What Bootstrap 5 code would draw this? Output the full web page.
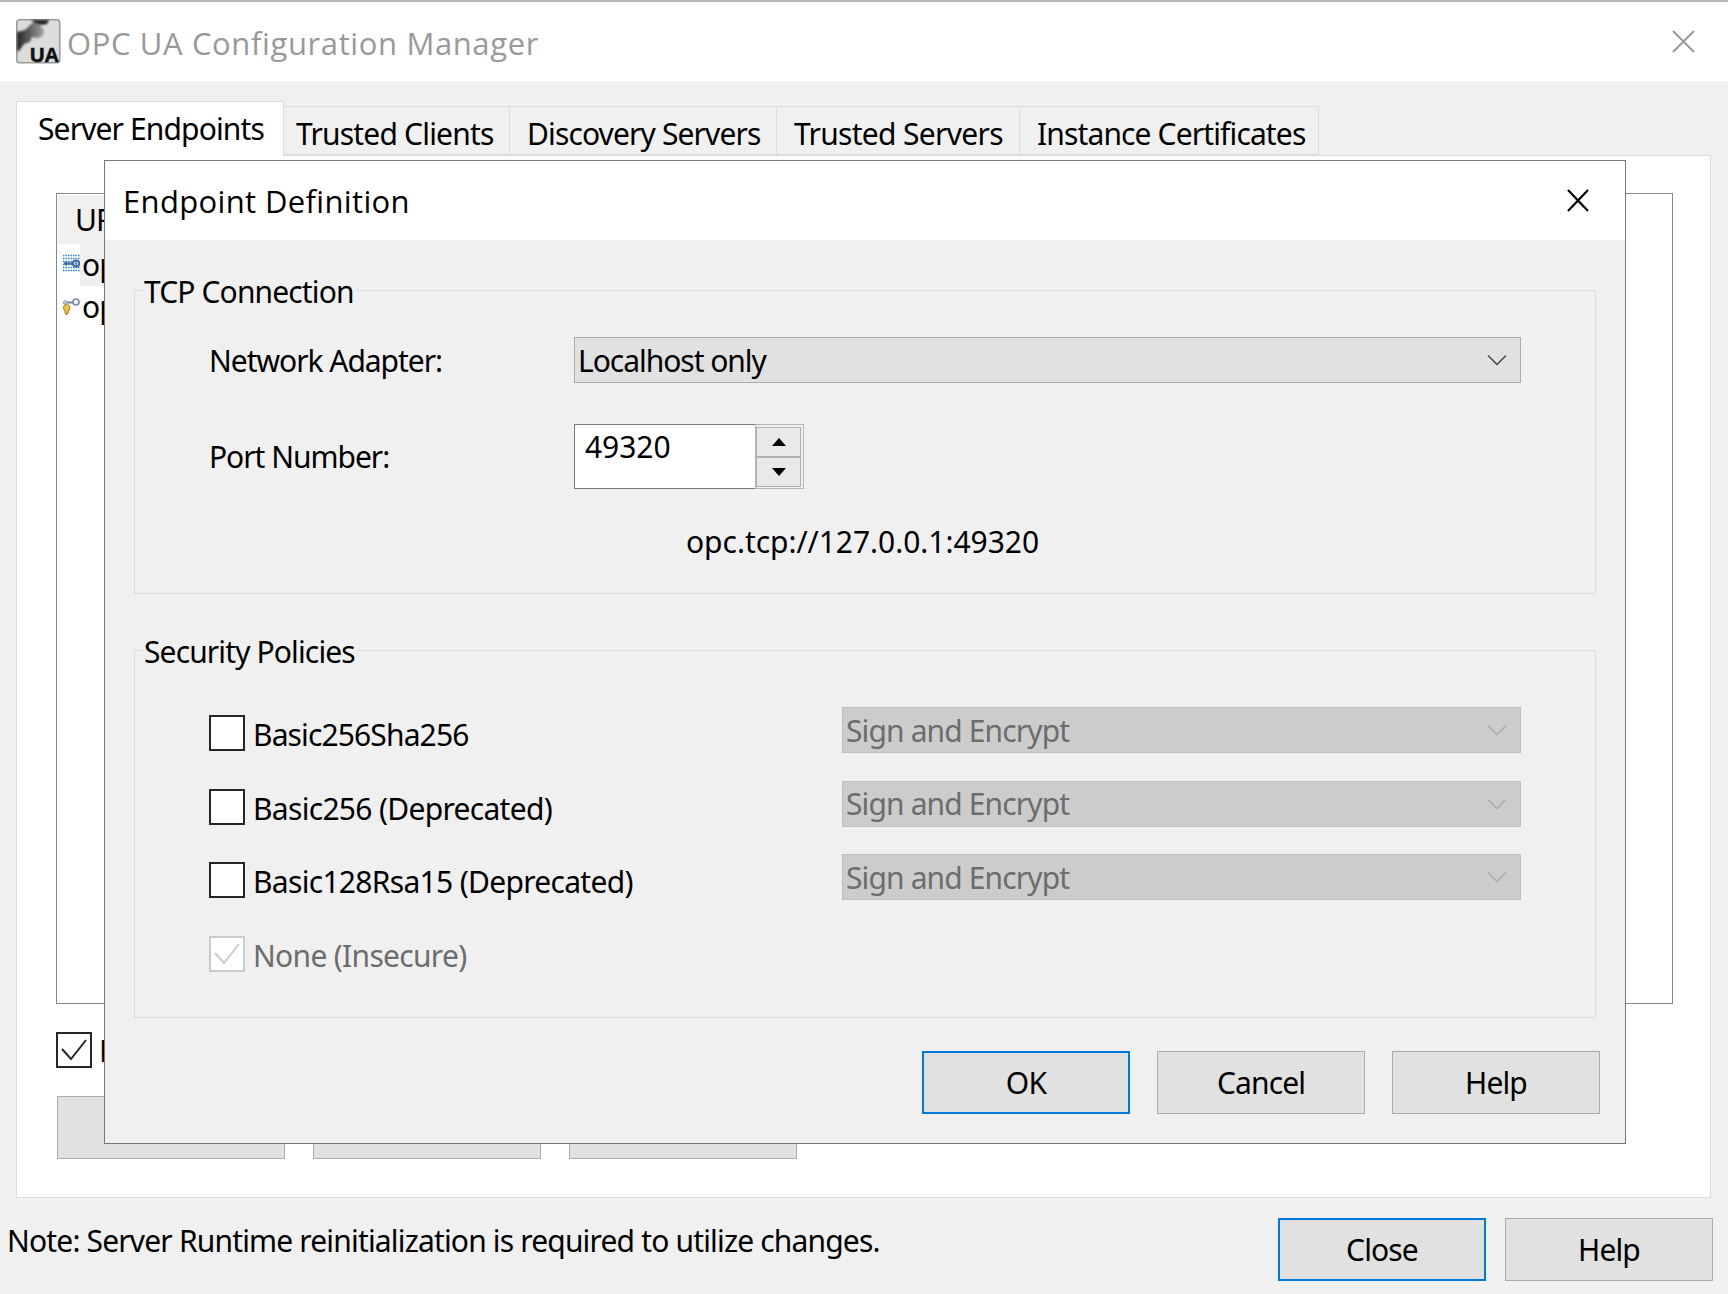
<!DOCTYPE html>
<html lang="en">
<head>
<meta charset="utf-8">
<title>OPC UA Configuration Manager</title>
<link href="https://cdn.jsdelivr.net/npm/bootstrap@5.3.0/dist/css/bootstrap.min.css" rel="stylesheet">
<style>
body{width:1728px;height:1294px;overflow:hidden;background:#f0f0f0;color:#000;font:30px/40px "Noto Sans",sans-serif;letter-spacing:-.87px;position:relative}
.ls-a{letter-spacing:-.69px}
.ls-b{letter-spacing:-1.03px}
.ls-0{letter-spacing:-.04px}
.win-title{height:81px;flex:none;background:#fff;border-top:2px solid #b5b8b5;padding:17px 33px 0 16px}
.win-title .cap{font:31px/42px "Open Sans",sans-serif;color:#999;letter-spacing:.62px;margin:3px 0 0 6px}
.tabs{height:74px;flex:none;padding-left:16px;border:0;flex-wrap:nowrap}
.tabs .nav-link{border:1px solid #dcdcdc;border-left:0;border-radius:0;margin:0;color:#000;background:#f0f0f0;height:49px;line-height:40px;padding:7px 0 0 17px;white-space:nowrap}
.tabs .nav-link.active{border:1px solid #dcdcdc;border-bottom:0;background:#fff;height:55px;margin-bottom:-1px;position:relative;z-index:1;width:268px;padding-left:21px}
.tab-2{width:226px}.tab-3{width:267px}.tab-4{width:243px}.tab-5{width:299px}
.tabs .tab-2{padding-left:12px;letter-spacing:-.8px}
.panel{margin:0 17px 0 16px;height:1043px;flex:none;border:1px solid #dcdcdc;background:#fff;padding:37px 37px 0 39px}
.list{height:811px;border:1px solid #828790;padding:1px}
.list .head{height:49px;width:1400px;background:#f0f0f0;padding:5px 0 0 17px}
.list .entry{height:42px;width:1400px;padding-left:4px}
.list .lbl{padding:0 0 0 2px;height:42px;line-height:41px}
.list .lbl.sel{background:#f0f0f0}
.wbtn{border:1px solid #adadad;border-radius:0;background:#e1e1e1;color:#000;width:208px;height:63px;padding:0;font-size:30px;line-height:61px;letter-spacing:inherit}
.wbtn.def{border:2px solid #0078d7;line-height:59px}
.wbtn.wide{width:228px}
.cbox{width:36px;height:36px;border:2px solid #262626;background:#fff;flex:none;color:#262626}
.cbox svg{display:block}
.cbox.off{border-color:#ccc;color:#ccc}
.dlg{position:absolute;left:104px;top:160px;width:1522px;height:984px;border:1px solid #777;background:#f0f0f0;z-index:5}
.dlg-title{height:79px;background:#fff;padding:19px 36px 0 18px}
.dlg-title .cap{font:31px/42px "Open Sans",sans-serif;letter-spacing:.35px}
.dlg-title svg{margin-top:1px}
.group{margin:0 29px;border:1px solid #dcdcdc}
.group .leg{display:block;width:max-content;background:#f0f0f0;margin:-19px 0 0 7px;padding:0 2px;height:39px}
.g-tcp{margin-top:50px;height:304px}
.g-sec{margin-top:56px;height:368px}
.combo{border:1px solid #adadad;background:#e1e1e1;height:46px;padding:0 13px 0 3px;line-height:45px}
.combo.off{background:#ccc;border-color:#bfbfbf;color:#6d6d6d;width:679px}
.combo.off svg{color:#aaa}
.net{margin-top:26px;padding:0 74px}
.port{margin-top:39px;padding-left:74px}
.flabel{width:365px;flex:none}
.spin{width:230px;height:65px;border:1px solid #7a7a7a;background:#fff}
.spin .num{padding:2px 0 0 10px}
.spin .ud{width:47px;outline:1px solid #b6b6ba;background:#f0f0f0;padding:2px 2px 1px 0}
.spin .ud span{height:30px;border:1px solid #b0b0b0;background:#e9e9e9}
.url{margin-top:32px;padding-left:551px}
.policies{padding-top:36px}
.policy{height:73.7px;padding:0 74px}
.policy .ptxt{margin-left:8px}
.dlg-btns{gap:27px;padding-right:25px;margin-top:33px}
</style>
</head>
<body class="d-flex flex-column">
<header class="win-title d-flex align-items-start">
<svg width="45" height="45" viewBox="0 0 45 45"><defs><linearGradient id="g" x1="0" y1="0" x2="30" y2="0" gradientUnits="userSpaceOnUse"><stop offset="0" stop-color="#222"/><stop offset=".5" stop-color="#666"/><stop offset="1" stop-color="#aaa"/></linearGradient><filter id="b"><feGaussianBlur stdDeviation="1"/></filter></defs><rect x=".8" y=".8" width="43" height="43" rx="3" fill="#dcdcdc" stroke="#999" stroke-width="1.500"/><g filter="url(#b)"><path d="M1 13 9 11 14 6 19 2 24 6 28 11 27 17 21 19 16 18 14 23 8 25 3 32H1Z" fill="url(#g)"/><path d="M15 1H33L31 5 25 6 19 4Z" fill="#222"/></g><text x="14" y="43" font-family="Liberation Sans" font-weight="700" font-size="20" letter-spacing="0" textLength="29" lengthAdjust="spacingAndGlyphs" fill="#111" stroke="#111" stroke-width=".6">UA</text></svg>
<span class="cap">OPC UA Configuration Manager</span>
<svg class="ms-auto" width="24" height="40" viewBox="0 0 24 40"><path d="M2 12 23 33M23 12 2 33" stroke="#999" stroke-width="2" fill="none"/></svg>
</header>
<nav class="nav nav-tabs tabs align-items-end">
<a class="nav-link active">Server Endpoints</a>
<a class="nav-link tab-2">Trusted Clients</a>
<a class="nav-link tab-3">Discovery Servers</a>
<a class="nav-link tab-4 ls-a">Trusted Servers</a>
<a class="nav-link tab-5">Instance Certificates</a>
</nav>
<main class="panel">
<div class="list">
<div class="head">URL</div>
<div class="entry d-flex"><svg width="18" height="42" viewBox="0 0 18 42"><path d="M1 11.500H18M1 14.500H18M1 17.500H18M1 20.500H18M1 23.500H18M1 26.500H18" stroke="#2586e0" stroke-width="1.500" stroke-dasharray="1.500 1"/><path d="M2 19.500H11" stroke="#4f78a8" stroke-width="2.600"/><circle cx="14" cy="19.500" r="3.200" fill="#b8d2ee" stroke="#3f6da3" stroke-width="1.800"/><path d="M4 17V22M14 16V23" stroke="#345f96"/></svg><span class="lbl sel flex-grow-1">opc.tcp</span></div>
<div class="entry d-flex"><svg width="18" height="42" viewBox="0 0 18 42"><path d="M3 16.500H11" stroke="#6f8299" stroke-width="2"/><circle cx="3.200" cy="16.500" r="1.800" fill="#c5cedb" stroke="#8a9ab0"/><circle cx="14" cy="16" r="3" fill="#fff" stroke="#7b8ea8" stroke-width="1.700"/><path d="M4.500 18.500a3.500 3.300 0 0 1 1.800 6V26.500L4.500 28.500 3 26.500V24.500a3.500 3.300 0 0 1 1.500-6Z" fill="#f5c542" stroke="#b58a25" stroke-width="1.200"/></svg><span class="lbl">opc.tcp</span></div>
</div>
<div class="d-flex" style="margin-top:28px"><span class="cbox"><svg width="32" height="32" viewBox="0 0 32 32"><path d="M4 15 13 25 28 6" fill="none" stroke="currentColor" stroke-width="2"/></svg></span><span style="margin:-1px 0 -3px 7px">Enable</span></div>
<div class="d-flex" style="margin:28px 0 0 1px;gap:28px"><button class="btn wbtn wide"></button><button class="btn wbtn wide"></button><button class="btn wbtn wide"></button></div>
</main>
<footer class="d-flex align-items-start" style="padding:20px 15px 0 7px"><span style="margin-top:3px;letter-spacing:-.83px" class="me-auto">Note: Server Runtime reinitialization is required to utilize changes.</span><button class="btn wbtn def" style="margin-right:19px">Close</button><button class="btn wbtn">Help</button></footer>

<section class="dlg">
<div class="dlg-title d-flex"><span class="cap">Endpoint Definition</span><svg class="ms-auto" width="22" height="40" viewBox="0 0 22 40"><path d="M1 9 21 30M21 9 1 30" stroke="#000" stroke-width="2.200" fill="none"/></svg></div>
<div class="group g-tcp"><span class="leg">TCP Connection</span>
<div class="net d-flex"><span class="flabel ls-b" style="line-height:48px">Network Adapter:</span><div class="combo flex-grow-1 d-flex justify-content-between align-items-center"><span class="ls-b">Localhost only</span><svg width="20" height="12" viewBox="0 0 20 12"><path d="M1 1.500 10 10.500 19 1.500" fill="none" stroke="#444" stroke-width="1.500"/></svg></div></div>
<div class="port d-flex"><span class="flabel ls-b" style="line-height:66px">Port Number:</span><div class="spin d-flex justify-content-between"><span class="num ls-0">49320</span><div class="ud d-flex flex-column"><span class="d-flex justify-content-center align-items-center"><svg width="14" height="8"><path d="M0 8 7 0 14 8Z"/></svg></span><span class="d-flex justify-content-center align-items-center"><svg width="14" height="8"><path d="M0 0 7 8 14 0Z"/></svg></span></div></div></div>
<div class="url ls-0">opc.tcp://127.0.0.1:49320</div>
</div>
<div class="group g-sec"><span class="leg">Security Policies</span>
<div class="policies">
<div class="policy d-flex align-items-start"><span class="cbox mt-2"></span><span class="ptxt mt-2">Basic256Sha256</span><div class="combo off ms-auto d-flex justify-content-between align-items-center"><span>Sign and Encrypt</span><svg width="20" height="12" viewBox="0 0 20 12"><path d="M1 1.500 10 10.500 19 1.500" fill="none" stroke="currentColor" stroke-width="1.500"/></svg></div></div>
<div class="policy d-flex align-items-start"><span class="cbox mt-2"></span><span class="ptxt mt-2 ls-a">Basic256 (Deprecated)</span><div class="combo off ms-auto d-flex justify-content-between align-items-center"><span>Sign and Encrypt</span><svg width="20" height="12" viewBox="0 0 20 12"><path d="M1 1.500 10 10.500 19 1.500" fill="none" stroke="currentColor" stroke-width="1.500"/></svg></div></div>
<div class="policy d-flex align-items-start"><span class="cbox mt-2"></span><span class="ptxt mt-2 ls-a">Basic128Rsa15 (Deprecated)</span><div class="combo off ms-auto d-flex justify-content-between align-items-center"><span>Sign and Encrypt</span><svg width="20" height="12" viewBox="0 0 20 12"><path d="M1 1.500 10 10.500 19 1.500" fill="none" stroke="currentColor" stroke-width="1.500"/></svg></div></div>
<div class="policy d-flex align-items-start"><span class="cbox off mt-2"><svg width="32" height="32" viewBox="0 0 32 32"><path d="M4 15 13 25 28 6" fill="none" stroke="currentColor" stroke-width="2"/></svg></span><span class="ptxt mt-2 ls-a" style="color:#6d6d6d">None (Insecure)</span></div>
</div>
</div>
<div class="dlg-btns d-flex justify-content-end"><button class="btn wbtn def">OK</button><button class="btn wbtn">Cancel</button><button class="btn wbtn">Help</button></div>
</section>
<script src="https://cdn.jsdelivr.net/npm/bootstrap@5.3.0/dist/js/bootstrap.bundle.min.js"></script>
</body>
</html>
